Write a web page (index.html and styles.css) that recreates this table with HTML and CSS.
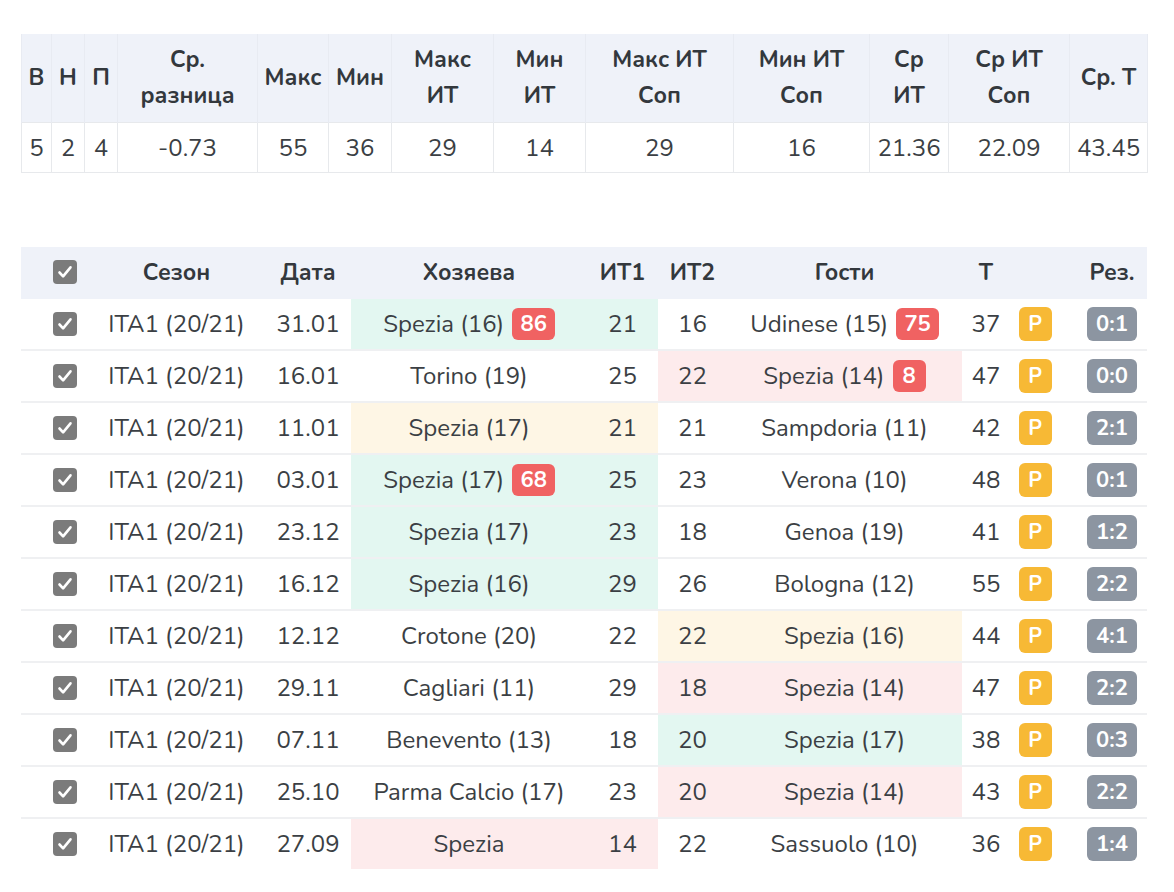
FILE: index.html
```html
<!DOCTYPE html>
<html lang="ru">
<head>
<meta charset="utf-8">
<title>Spezia</title>
<link rel="stylesheet" href="styles.css">
</head>
<body>
<div class="page">
  <table class="stats">
    <colgroup>
      <col style="width:30px"><col style="width:33px"><col style="width:33px"><col style="width:140px">
      <col style="width:71px"><col style="width:63px"><col style="width:102px"><col style="width:92px">
      <col style="width:148px"><col style="width:136px"><col style="width:79px"><col style="width:121px">
      <col style="width:78px">
    </colgroup>
    <thead>
      <tr>
        <th>В</th><th>Н</th><th>П</th><th>Ср.<br>разница</th><th>Макс</th><th>Мин</th>
        <th>Макс<br>ИТ</th><th>Мин<br>ИТ</th><th>Макс ИТ<br>Соп</th><th>Мин ИТ<br>Соп</th>
        <th>Ср<br>ИТ</th><th>Ср ИТ<br>Соп</th><th>Ср. Т</th>
      </tr>
    </thead>
    <tbody>
      <tr>
        <td>5</td><td>2</td><td>4</td><td>-0.73</td><td>55</td><td>36</td><td>29</td><td>14</td>
        <td>29</td><td>16</td><td>21.36</td><td>22.09</td><td>43.45</td>
      </tr>
    </tbody>
  </table>

  <table class="games">
    <colgroup>
      <col style="width:87px"><col style="width:147px"><col style="width:96px"><col style="width:236px">
      <col style="width:71px"><col style="width:69px"><col style="width:235px"><col style="width:48px">
      <col style="width:50px"><col style="width:87px">
    </colgroup>
    <thead>
      <tr>
        <th class="c-chk"><span class="chk"><svg viewBox="0 0 24 24" width="24" height="24"><rect x="0" y="0" width="24" height="24" rx="4" fill="#7b7b7b"/><path d="M6.5 12.5l3.6 3.8 7.4-9" fill="none" stroke="#fff" stroke-width="2.6" stroke-linecap="round" stroke-linejoin="round"/></svg></span></th>
        <th class="c-season">Сезон</th>
        <th class="c-date">Дата</th>
        <th>Хозяева</th>
        <th>ИТ1</th>
        <th>ИТ2</th>
        <th>Гости</th>
        <th>Т</th>
        <th></th>
        <th class="c-res">Рез.</th>
      </tr>
    </thead>
    <tbody>
      <tr>
        <td class="c-chk"><span class="chk"><svg viewBox="0 0 24 24" width="24" height="24"><rect width="24" height="24" rx="4" fill="#7b7b7b"/><path d="M6.5 12.5l3.6 3.8 7.4-9" fill="none" stroke="#fff" stroke-width="2.6" stroke-linecap="round" stroke-linejoin="round"/></svg></span></td>
        <td class="c-season">ITA1 (20/21)</td><td class="c-date">31.01</td>
        <td class="win">Spezia (16) <span class="hot">86</span></td><td class="win">21</td>
        <td>16</td><td>Udinese (15) <span class="hot">75</span></td>
        <td>37</td><td><span class="p">P</span></td><td class="c-res"><span class="score">0:1</span></td>
      </tr>
      <tr>
        <td class="c-chk"><span class="chk"><svg viewBox="0 0 24 24" width="24" height="24"><rect width="24" height="24" rx="4" fill="#7b7b7b"/><path d="M6.5 12.5l3.6 3.8 7.4-9" fill="none" stroke="#fff" stroke-width="2.6" stroke-linecap="round" stroke-linejoin="round"/></svg></span></td>
        <td class="c-season">ITA1 (20/21)</td><td class="c-date">16.01</td>
        <td>Torino (19)</td><td>25</td>
        <td class="loss">22</td><td class="loss">Spezia (14) <span class="hot">8</span></td>
        <td>47</td><td><span class="p">P</span></td><td class="c-res"><span class="score">0:0</span></td>
      </tr>
      <tr>
        <td class="c-chk"><span class="chk"><svg viewBox="0 0 24 24" width="24" height="24"><rect width="24" height="24" rx="4" fill="#7b7b7b"/><path d="M6.5 12.5l3.6 3.8 7.4-9" fill="none" stroke="#fff" stroke-width="2.6" stroke-linecap="round" stroke-linejoin="round"/></svg></span></td>
        <td class="c-season">ITA1 (20/21)</td><td class="c-date">11.01</td>
        <td class="draw">Spezia (17)</td><td class="draw">21</td>
        <td>21</td><td>Sampdoria (11)</td>
        <td>42</td><td><span class="p">P</span></td><td class="c-res"><span class="score">2:1</span></td>
      </tr>
      <tr>
        <td class="c-chk"><span class="chk"><svg viewBox="0 0 24 24" width="24" height="24"><rect width="24" height="24" rx="4" fill="#7b7b7b"/><path d="M6.5 12.5l3.6 3.8 7.4-9" fill="none" stroke="#fff" stroke-width="2.6" stroke-linecap="round" stroke-linejoin="round"/></svg></span></td>
        <td class="c-season">ITA1 (20/21)</td><td class="c-date">03.01</td>
        <td class="win">Spezia (17) <span class="hot">68</span></td><td class="win">25</td>
        <td>23</td><td>Verona (10)</td>
        <td>48</td><td><span class="p">P</span></td><td class="c-res"><span class="score">0:1</span></td>
      </tr>
      <tr>
        <td class="c-chk"><span class="chk"><svg viewBox="0 0 24 24" width="24" height="24"><rect width="24" height="24" rx="4" fill="#7b7b7b"/><path d="M6.5 12.5l3.6 3.8 7.4-9" fill="none" stroke="#fff" stroke-width="2.6" stroke-linecap="round" stroke-linejoin="round"/></svg></span></td>
        <td class="c-season">ITA1 (20/21)</td><td class="c-date">23.12</td>
        <td class="win">Spezia (17)</td><td class="win">23</td>
        <td>18</td><td>Genoa (19)</td>
        <td>41</td><td><span class="p">P</span></td><td class="c-res"><span class="score">1:2</span></td>
      </tr>
      <tr>
        <td class="c-chk"><span class="chk"><svg viewBox="0 0 24 24" width="24" height="24"><rect width="24" height="24" rx="4" fill="#7b7b7b"/><path d="M6.5 12.5l3.6 3.8 7.4-9" fill="none" stroke="#fff" stroke-width="2.6" stroke-linecap="round" stroke-linejoin="round"/></svg></span></td>
        <td class="c-season">ITA1 (20/21)</td><td class="c-date">16.12</td>
        <td class="win">Spezia (16)</td><td class="win">29</td>
        <td>26</td><td>Bologna (12)</td>
        <td>55</td><td><span class="p">P</span></td><td class="c-res"><span class="score">2:2</span></td>
      </tr>
      <tr>
        <td class="c-chk"><span class="chk"><svg viewBox="0 0 24 24" width="24" height="24"><rect width="24" height="24" rx="4" fill="#7b7b7b"/><path d="M6.5 12.5l3.6 3.8 7.4-9" fill="none" stroke="#fff" stroke-width="2.6" stroke-linecap="round" stroke-linejoin="round"/></svg></span></td>
        <td class="c-season">ITA1 (20/21)</td><td class="c-date">12.12</td>
        <td>Crotone (20)</td><td>22</td>
        <td class="draw">22</td><td class="draw">Spezia (16)</td>
        <td>44</td><td><span class="p">P</span></td><td class="c-res"><span class="score">4:1</span></td>
      </tr>
      <tr>
        <td class="c-chk"><span class="chk"><svg viewBox="0 0 24 24" width="24" height="24"><rect width="24" height="24" rx="4" fill="#7b7b7b"/><path d="M6.5 12.5l3.6 3.8 7.4-9" fill="none" stroke="#fff" stroke-width="2.6" stroke-linecap="round" stroke-linejoin="round"/></svg></span></td>
        <td class="c-season">ITA1 (20/21)</td><td class="c-date">29.11</td>
        <td>Cagliari (11)</td><td>29</td>
        <td class="loss">18</td><td class="loss">Spezia (14)</td>
        <td>47</td><td><span class="p">P</span></td><td class="c-res"><span class="score">2:2</span></td>
      </tr>
      <tr>
        <td class="c-chk"><span class="chk"><svg viewBox="0 0 24 24" width="24" height="24"><rect width="24" height="24" rx="4" fill="#7b7b7b"/><path d="M6.5 12.5l3.6 3.8 7.4-9" fill="none" stroke="#fff" stroke-width="2.6" stroke-linecap="round" stroke-linejoin="round"/></svg></span></td>
        <td class="c-season">ITA1 (20/21)</td><td class="c-date">07.11</td>
        <td>Benevento (13)</td><td>18</td>
        <td class="win">20</td><td class="win">Spezia (17)</td>
        <td>38</td><td><span class="p">P</span></td><td class="c-res"><span class="score">0:3</span></td>
      </tr>
      <tr>
        <td class="c-chk"><span class="chk"><svg viewBox="0 0 24 24" width="24" height="24"><rect width="24" height="24" rx="4" fill="#7b7b7b"/><path d="M6.5 12.5l3.6 3.8 7.4-9" fill="none" stroke="#fff" stroke-width="2.6" stroke-linecap="round" stroke-linejoin="round"/></svg></span></td>
        <td class="c-season">ITA1 (20/21)</td><td class="c-date">25.10</td>
        <td>Parma Calcio (17)</td><td>23</td>
        <td class="loss">20</td><td class="loss">Spezia (14)</td>
        <td>43</td><td><span class="p">P</span></td><td class="c-res"><span class="score">2:2</span></td>
      </tr>
      <tr class="last">
        <td class="c-chk"><span class="chk"><svg viewBox="0 0 24 24" width="24" height="24"><rect width="24" height="24" rx="4" fill="#7b7b7b"/><path d="M6.5 12.5l3.6 3.8 7.4-9" fill="none" stroke="#fff" stroke-width="2.6" stroke-linecap="round" stroke-linejoin="round"/></svg></span></td>
        <td class="c-season">ITA1 (20/21)</td><td class="c-date">27.09</td>
        <td class="loss">Spezia</td><td class="loss">14</td>
        <td>22</td><td>Sassuolo (10)</td>
        <td>36</td><td><span class="p">P</span></td><td class="c-res"><span class="score">1:4</span></td>
      </tr>
    </tbody>
  </table>
</div>
</body>
</html>
```

FILE: styles.css
```css
html, body {
  margin: 0;
  padding: 0;
  background: #ffffff;
}

body {
  font-family: "Nunito", "Lato", "Noto Sans", sans-serif;
  font-size: 24px;
  color: #3b3f44;
}

.page {
  width: 1126px;
  margin: 34px 0 0 21px;
}

table {
  border-collapse: collapse;
  table-layout: fixed;
  width: 1126px;
}

th {
  font-weight: 700;
  font-size: 23px;
  color: #33383d;
}

/* ---- stats table ---- */
.stats thead tr {
  background: #eff2f9;
}

.stats th {
  height: 88px;
  padding: 0;
  line-height: 36px;
  text-align: center;
  border-left: 1px solid #e8ebf2;
  border-right: 1px solid #e8ebf2;
}

.stats td {
  height: 49px;
  padding: 0;
  text-align: center;
  line-height: 36px;
  border: 1px solid #e7e9ec;
}

/* ---- games table ---- */
.games {
  margin-top: 74px;
}

.games thead tr {
  background: #eff2f9;
}

.games th {
  height: 52px;
  padding: 0;
  text-align: center;
  line-height: 36px;
}

.games td {
  height: 50px;
  padding: 0;
  text-align: center;
  line-height: 36px;
  border-bottom: 2px solid #eff0f2;
}

.games tr.last td {
  border-bottom: none;
}

.games .c-chk {
  text-align: center;
}

.games .c-season {
  padding-right: 10px;
}

.games .c-date {
  padding-left: 10px;
}

.games .c-res {
  padding-left: 17px;
}

.chk {
  display: inline-block;
  width: 24px;
  height: 24px;
  vertical-align: middle;
  margin-top: -4px;
}

.chk svg {
  display: block;
}

.win {
  background: #e3f7f1;
}

.loss {
  background: #fdebec;
}

.draw {
  background: #fef6e5;
}

.hot {
  display: inline-block;
  min-width: 17px;
  height: 32px;
  padding: 0 8px;
  margin-left: 2px;
  border-radius: 6px;
  background: #f06262;
  color: #ffffff;
  font-weight: 700;
  font-size: 22px;
  line-height: 32px;
  vertical-align: middle;
  margin-top: -4px;
}

.p {
  display: inline-block;
  width: 33px;
  height: 34px;
  border-radius: 6px;
  background: #f7b935;
  color: #ffffff;
  font-weight: 700;
  font-size: 21px;
  line-height: 34px;
  vertical-align: middle;
  margin-top: -4px;
}

.score {
  display: inline-block;
  width: 50px;
  height: 34px;
  border-radius: 6px;
  background: #8c95a1;
  color: #ffffff;
  font-weight: 700;
  font-size: 22px;
  line-height: 34px;
  vertical-align: middle;
  margin-top: -4px;
}
```
